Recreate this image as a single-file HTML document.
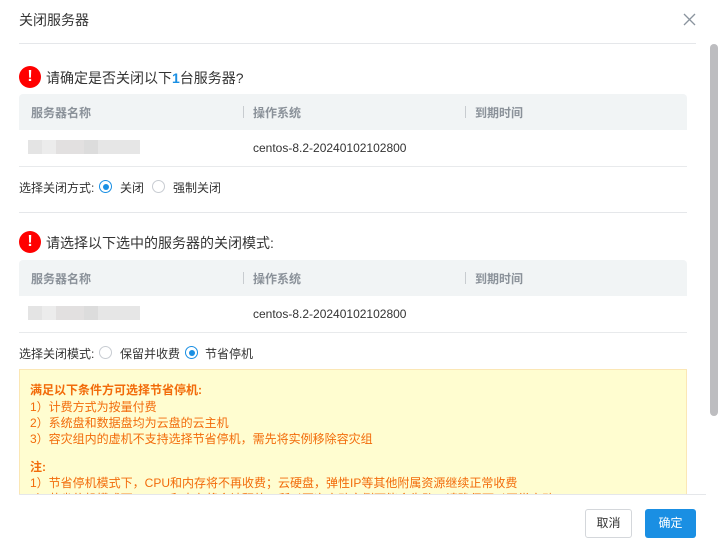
<!DOCTYPE html>
<html><head><meta charset="utf-8"><style>
*{margin:0;padding:0;box-sizing:border-box}
body{width:718px;height:549px;background:#fff;position:relative;overflow:hidden;font-family:"Liberation Sans","Noto Sans CJK SC",sans-serif;color:#333}
.a{position:absolute;white-space:nowrap}
.hr{position:absolute;height:1px;background:#e5e7ea}
.ico{position:absolute;width:22px;height:22px;border-radius:50%;background:#f00;color:#fff;font-weight:bold;font-size:16px;line-height:22px;text-align:center}
.th{position:absolute;left:19px;width:668px;height:36px;background:#f1f4f5;border-radius:4px 4px 0 0}
.th span{position:absolute;top:10px;font-size:12px;font-weight:bold;color:#8a9199}
.sep{position:absolute;top:12px;width:1px;height:12px;background:#c8ccd0}
.row{position:absolute;left:19px;width:668px;height:37px;border-bottom:1px solid #e8eaec}
.blur{position:absolute;left:9px;top:10px;width:112px;height:14px;background:linear-gradient(90deg,#e4e4e4 0 14px,#ececec 14px 28px,#e2e0e0 28px 56px,#dcdcdc 56px 70px,#e6e6e6 70px)}
.row .os{position:absolute;left:234px;top:11px;font-size:12px;color:#333}
.r{position:absolute;width:13px;height:13px;border-radius:50%;border:1px solid #c8ccd2;background:#fff}
.r.on{border-color:#1a8fe3}
.r.on:after{content:"";position:absolute;left:2.5px;top:2.5px;width:6px;height:6px;border-radius:50%;background:#1a8fe3}
.lbl{position:absolute;font-size:12px;color:#333;white-space:nowrap}
.y{position:absolute;left:19px;top:369px;width:668px;height:125px;background:#fffdd0;border:1px solid #fbe7b5;border-bottom:none;overflow:hidden;color:#f26b0a;font-size:12px}
.y div{position:absolute;left:10px;white-space:nowrap}
</style></head><body>
<div class="a" style="left:19px;top:10px;font-size:14px;color:#333">关闭服务器</div>
<svg class="a" style="left:683px;top:13px" width="13" height="13" viewBox="0 0 13 13"><path d="M1 1L12 12M12 1L1 12" stroke="#8a949e" stroke-width="1.3"/></svg>
<div class="hr" style="left:19px;top:43px;width:677px"></div>
<div class="a" style="left:710px;top:44px;width:8px;height:372px;background:#bdbdc0;border-radius:4px"></div>

<div class="ico" style="left:19px;top:66px">!</div>
<div class="a" style="left:46px;top:68px;font-size:14px">请确定是否关闭以下<b style="color:#1a8fe3">1</b>台服务器?</div>
<div class="th" style="top:94px"><span style="left:12px">服务器名称</span><div class="sep" style="left:224px"></div><span style="left:234px">操作系统</span><div class="sep" style="left:446px"></div><span style="left:456px">到期时间</span></div>
<div class="row" style="top:130px"><div class="blur"></div><div class="os">centos-8.2-20240102102800</div></div>
<div class="lbl" style="left:19px;top:179px">选择关闭方式:</div>
<div class="r on" style="left:99px;top:180px"></div><div class="lbl" style="left:120px;top:179px">关闭</div>
<div class="r" style="left:152px;top:180px"></div><div class="lbl" style="left:173px;top:179px">强制关闭</div>

<div class="hr" style="left:19px;top:212px;width:668px"></div>

<div class="ico" style="left:19px;top:231px">!</div>
<div class="a" style="left:46px;top:233px;font-size:14px">请选择以下选中的服务器的关闭模式:</div>
<div class="th" style="top:260px"><span style="left:12px">服务器名称</span><div class="sep" style="left:224px"></div><span style="left:234px">操作系统</span><div class="sep" style="left:446px"></div><span style="left:456px">到期时间</span></div>
<div class="row" style="top:296px"><div class="blur"></div><div class="os">centos-8.2-20240102102800</div></div>
<div class="lbl" style="left:19px;top:345px">选择关闭模式:</div>
<div class="r" style="left:99px;top:346px"></div><div class="lbl" style="left:120px;top:345px">保留并收费</div>
<div class="r on" style="left:185px;top:346px"></div><div class="lbl" style="left:205px;top:345px">节省停机</div>

<div class="y">
<div style="top:11px;font-weight:bold">满足以下条件方可选择节省停机:</div>
<div style="top:28px">1）计费方式为按量付费</div>
<div style="top:44px">2）系统盘和数据盘均为云盘的云主机</div>
<div style="top:60px">3）容灾组内的虚机不支持选择节省停机，需先将实例移除容灾组</div>
<div style="top:88px;font-weight:bold">注:</div>
<div style="top:104px">1）节省停机模式下，CPU和内存将不再收费；云硬盘，弹性IP等其他附属资源继续正常收费</div>
<div style="top:120px">2）节省停机模式下，CPU和内存将会被释放，所以再次启动实例可能会失败，请确保可以正常启动</div>
</div>
<div class="hr" style="left:19px;top:494px;width:687px"></div>

<div class="a" style="left:585px;top:509px;width:47px;height:29px;border:1px solid #d4d7db;border-radius:3px;font-size:12px;line-height:27px;text-align:center;color:#333">取消</div>
<div class="a" style="left:645px;top:509px;width:51px;height:29px;background:#1a8fe3;border-radius:3px;font-size:12px;line-height:29px;text-align:center;color:#fff">确定</div>
</body></html>
